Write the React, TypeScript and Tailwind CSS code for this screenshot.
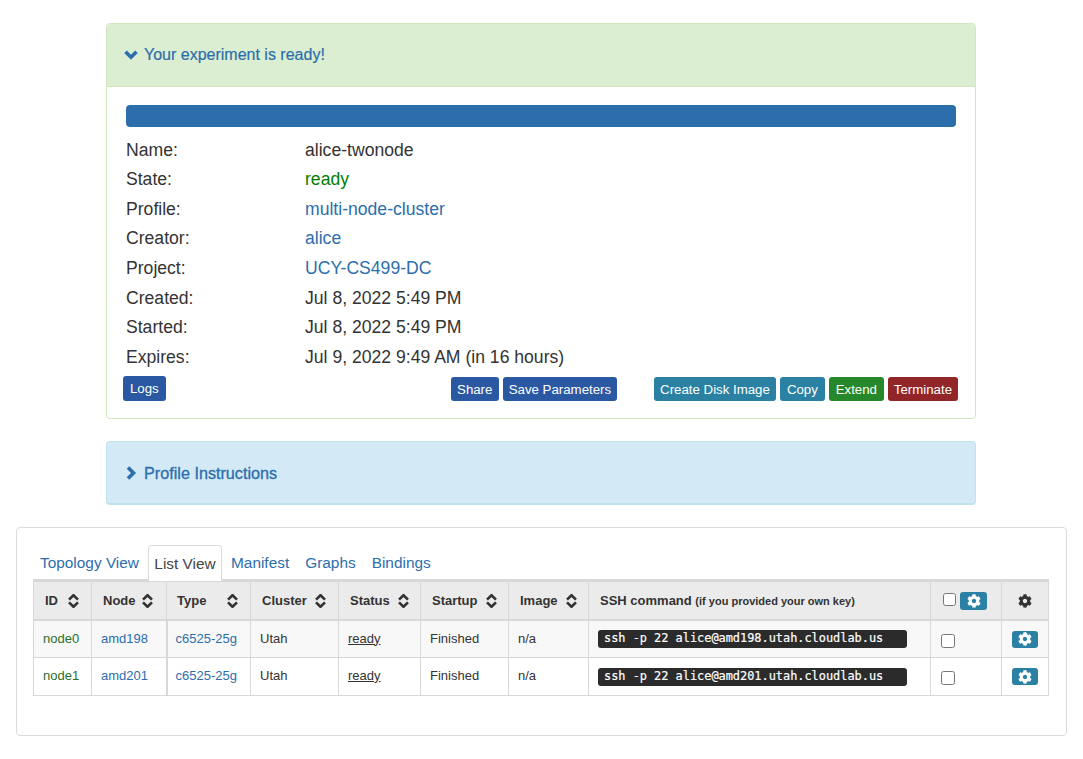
import { FaCog } from "react-icons/fa";

const rows = [
    { label: "Name:", value: "alice-twonode", cls: "text-[#333]" },
    { label: "State:", value: "ready", cls: "text-[#008000]" },
    { label: "Profile:", value: "multi-node-cluster", cls: "text-[#2c6eac]" },
    { label: "Creator:", value: "alice", cls: "text-[#2c6eac]" },
    { label: "Project:", value: "UCY-CS499-DC", cls: "text-[#2c6eac]" },
    { label: "Created:", value: "Jul 8, 2022 5:49 PM", cls: "text-[#333]" },
    { label: "Started:", value: "Jul 8, 2022 5:49 PM", cls: "text-[#333]" },
    { label: "Expires:", value: "Jul 9, 2022 9:49 AM (in 16 hours)", cls: "text-[#333]" },
];

const nodes = [
    { id: "node0", node: "amd198", bg: "bg-[#f8f8f8]" },
    { id: "node1", node: "amd201", bg: "bg-white" },
];

function Sort() {
    return (
        <svg width="11" height="14" viewBox="0 0 11 14" className="inline-block text-[#333]">
            <path d="M1 5.6 5.5 1.2 10 5.6" fill="none" stroke="currentColor" strokeWidth="2.6" />
            <path d="M1 8.4 5.5 12.8 10 8.4" fill="none" stroke="currentColor" strokeWidth="2.6" />
        </svg>
    );
}

function Chevron({ d }: { d: string }) {
    return (
        <svg width="14" height="14" viewBox="0 0 14 14" className="text-[#2c6eac]">
            <path d={d} fill="none" stroke="currentColor" strokeWidth="3.6" />
        </svg>
    );
}

function Head({ label, sortClass, pad = "pl-[11px]" }: { label: string; sortClass: string; pad?: string }) {
    return (
        <th className={`border border-[#d8d8d8] border-b-[2px] border-t-[3px] bg-[#ebebeb] pt-px text-left text-[13px] font-bold text-[#333] ${pad}`}>
            <span className="flex items-center">
                {label}
                <span className={`flex ${sortClass}`}>
                    <Sort />
                </span>
            </span>
        </th>
    );
}

function Btn({ label, cls, pad = "px-[6px]" }: { label: string; cls: string; pad?: string }) {
    return (
        <span className={`flex h-6 items-center justify-center rounded-[3px] pt-[2px] text-[13.25px] text-white ${pad} ${cls}`}>
            {label}
        </span>
    );
}

export default function App() {
    return (
        <div className="h-[759px] overflow-hidden bg-white pt-[23px] font-['Liberation_Sans',Arial,sans-serif]">
            <div className="mx-[106px] w-[870px] rounded-[4px] border border-[#cfe8bf] bg-white">
                <div className="flex h-[63px] items-center gap-[6px] rounded-t-[4px] border-b border-[#d0e8c0] bg-[#dceed2] pl-[17px] text-[16px] text-[#2c6eac]">
                    <Chevron d="M1.5 3.8 7 9.3 12.5 3.8" />
                    <span className="[-webkit-text-stroke:0.2px_#2c6eac]">Your experiment is ready!</span>
                </div>
                <div className="px-[19px] pt-[18px] pb-[17px]">
                    <div className="mb-[8px] h-[22px] rounded-[4px] bg-[#2c6eac]" />
                    {rows.map((r) => (
                        <div key={r.label} className="flex h-[29.6px] items-center text-[17.6px] text-[#333]">
                            <span className="w-[179px]">{r.label}</span>
                            <span className={r.cls}>{r.value}</span>
                        </div>
                    ))}
                    <div className="-mx-[3px] mt-[4px] flex items-end">
                        <span className="flex h-[25px] items-center rounded-[3px] bg-[#2b58a3] px-[7px] pt-px text-[13.25px] text-white">Logs</span>
                        <div className="ml-[285px] flex gap-1">
                            <Btn label="Share" cls="bg-[#2b58a3]" pad="w-[48px]" />
                            <Btn label="Save Parameters" cls="bg-[#2b58a3]" />
                        </div>
                        <div className="ml-[37px] flex gap-1">
                            <Btn label="Create Disk Image" cls="bg-[#2a81a3]" />
                            <Btn label="Copy" cls="bg-[#2a81a3]" pad="w-[45px]" />
                            <Btn label="Extend" cls="bg-[#25892b]" pad="w-[55px]" />
                            <Btn label="Terminate" cls="bg-[#922527]" />
                        </div>
                    </div>
                </div>
            </div>

            <div className="mx-[106px] mt-[22px] flex h-[64px] w-[870px] items-center rounded-[4px] border border-[#bfe3ee] border-b-2 bg-[#d3e9f6] pt-px pl-[17px] text-[16.2px] font-medium text-[#2c6eac]">
                <Chevron d="M4 1.5 9.5 7 4 12.5" />
                <span className="ml-[6px] [-webkit-text-stroke:0.3px_#2c6eac]">Profile Instructions</span>
            </div>

            <div className="mx-[16px] mt-[22px] h-[209px] w-[1051px] rounded-[4px] border border-[#dcdcdc] px-[16px] pt-[17px]">
                <div className="flex h-[35px] items-end text-[15.4px] text-[#2c6eac]">
                    <span className="flex h-[35px] w-[115px] items-center pl-[7px]">Topology View</span>
                    <span className="-mb-px flex h-[36px] w-[74px] items-center justify-center rounded-t-[4px] border border-b-0 border-[#dcdcdc] bg-white text-[#444]">List View</span>
                    <span className="flex h-[35px] items-center pl-[9px]">Manifest</span>
                    <span className="flex h-[35px] items-center pl-[16px]">Graphs</span>
                    <span className="flex h-[35px] items-center pl-[16px]">Bindings</span>
                </div>
                <table className="-mt-px w-[1015px] table-fixed border-collapse text-[13px] text-[#333]">
                    <colgroup>
                        <col className="w-[58px]" />
                        <col className="w-[75px]" />
                        <col className="w-[84px]" />
                        <col className="w-[88px]" />
                        <col className="w-[82px]" />
                        <col className="w-[88px]" />
                        <col className="w-[80px]" />
                        <col className="w-[342px]" />
                        <col className="w-[71px]" />
                        <col className="w-[47px]" />
                    </colgroup>
                    <thead>
                        <tr className="h-[40px]">
                            <Head label="ID" sortClass="ml-[10px]" />
                            <Head label="Node" sortClass="ml-[6px]" />
                            <Head label="Type" sortClass="ml-[21px]" pad="pl-[10px]" />
                            <Head label="Cluster" sortClass="ml-[8px]" />
                            <Head label="Status" sortClass="ml-[8px]" />
                            <Head label="Startup" sortClass="ml-[8px]" />
                            <Head label="Image" sortClass="ml-[8px]" />
                            <th className="border border-[#d8d8d8] border-b-[2px] border-t-[3px] bg-[#ebebeb] pt-px pl-[11px] text-left text-[13px] font-bold">
                                SSH command <span className="text-[11px]">(if you provided your own key)</span>
                            </th>
                            <th className="border border-[#d8d8d8] border-b-[2px] border-t-[3px] bg-[#ebebeb]">
                                <span className="flex items-center justify-center gap-[4px] pr-[2px]">
                                    <input type="checkbox" className="-mt-[3px] h-[13px] w-[13px]" />
                                    <span className="flex h-[18px] w-[27px] items-center justify-center rounded-[3px] bg-[#2a81a3] text-[14px] text-white">
                                        <FaCog />
                                    </span>
                                </span>
                            </th>
                            <th className="border border-[#d8d8d8] border-b-[2px] border-t-[3px] bg-[#ebebeb]">
                                <span className="flex justify-center text-[14px]">
                                    <FaCog />
                                </span>
                            </th>
                        </tr>
                    </thead>
                    <tbody>
                        {nodes.map((n) => (
                            <tr key={n.id} className={`h-[37.5px] ${n.bg}`}>
                                <td className="border border-[#d8d8d8] pb-[2px] pl-[9px] text-[#2b6e2b]">{n.id}</td>
                                <td className="border border-[#d8d8d8] border-r-[2px] pb-[2px] pl-[9px] text-[#2c6eac]">{n.node}</td>
                                <td className="border border-[#d8d8d8] pb-[2px] pl-[8px] text-[#2c6eac]">c6525-25g</td>
                                <td className="border border-[#d8d8d8] pb-[2px] pl-[9px]">Utah</td>
                                <td className="border border-[#d8d8d8] pb-[2px] pl-[9px] underline">ready</td>
                                <td className="border border-[#d8d8d8] pb-[2px] pl-[9px]">Finished</td>
                                <td className="border border-[#d8d8d8] pb-[2px] pl-[9px]">n/a</td>
                                <td className="border border-[#d8d8d8] pl-[9px]">
                                    <span className="flex h-[18px] w-[309px] items-center rounded-[3px] bg-[#2b2b2b] pl-[6px] font-['DejaVu_Sans_Mono',monospace] text-[11.9px] whitespace-pre text-white [-webkit-text-stroke:0.2px_#fff]">
                                        ssh -p 22 alice@{n.node}.utah.cloudlab.us
                                    </span>
                                </td>
                                <td className="border border-[#d8d8d8] pl-[10px]">
                                    <input type="checkbox" className="mt-[3px] block h-[14px] w-[14px]" />
                                </td>
                                <td className="border border-[#d8d8d8]">
                                    <span className="mx-auto flex h-[17px] w-[26px] items-center justify-center rounded-[3px] bg-[#2a81a3] text-[14px] text-white">
                                        <FaCog />
                                    </span>
                                </td>
                            </tr>
                        ))}
                    </tbody>
                </table>
            </div>
        </div>
    );
}
